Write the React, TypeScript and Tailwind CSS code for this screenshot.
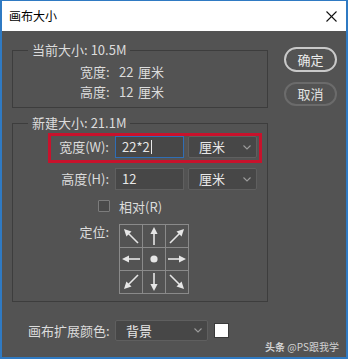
import React from "react";

type ArrowProps = { x1: number; y1: number; x2: number; y2: number };

function Arrow({ x1, y1, x2, y2 }: ArrowProps) {
  const dx = x2 - x1;
  const dy = y2 - y1;
  const len = Math.hypot(dx, dy);
  const ux = dx / len;
  const uy = dy / len;
  const hl = 7;
  const hw = 3.6;
  const bx = x2 - ux * hl;
  const by = y2 - uy * hl;
  const px = -uy;
  const py = ux;
  return (
    <g>
      <line x1={x1} y1={y1} x2={bx + ux} y2={by + uy} stroke="#e6e6e6" strokeWidth={1.6} />
      <polygon
        points={`${x2},${y2} ${bx + px * hw},${by + py * hw} ${bx - px * hw},${by - py * hw}`}
        fill="#e6e6e6"
      />
    </g>
  );
}

function Chevron() {
  return (
    <svg width="8" height="5" viewBox="0 0 8 5">
      <polyline points="0.5,0.5 4,4 7.5,0.5" fill="none" stroke="#9c9c9c" strokeWidth="1.1" />
    </svg>
  );
}

function AnchorGrid() {
  const arrows: ArrowProps[] = [
    { x1: 35, y1: 21, x2: 35, y2: 3 },
    { x1: 35, y1: 49, x2: 35, y2: 67 },
    { x1: 21, y1: 35, x2: 3, y2: 35 },
    { x1: 49, y1: 35, x2: 67, y2: 35 },
    { x1: 19, y1: 19, x2: 5, y2: 5 },
    { x1: 51, y1: 19, x2: 65, y2: 5 },
    { x1: 19, y1: 51, x2: 5, y2: 65 },
    { x1: 51, y1: 51, x2: 65, y2: 65 },
  ];
  return (
    <svg width="70" height="70" viewBox="0 0 70 70">
      <g stroke="#8a8a8a" strokeWidth="1" fill="none">
        <rect x="0.5" y="0.5" width="69" height="69" />
        <line x1="23.5" y1="0" x2="23.5" y2="70" />
        <line x1="46.5" y1="0" x2="46.5" y2="70" />
        <line x1="0" y1="23.5" x2="70" y2="23.5" />
        <line x1="0" y1="46.5" x2="70" y2="46.5" />
      </g>
      {arrows.map((a, i) => (
        <Arrow key={i} {...a} />
      ))}
      <circle cx="35" cy="35" r="3.6" fill="#e6e6e6" />
    </svg>
  );
}

export default function App() {
  return (
    <div className="relative flex h-[359px] w-[348px] flex-col overflow-hidden border-t border-l-2 border-r-2 border-b-2 border-[#2f7ac3] bg-[#535353] font-['Noto_Sans_CJK_SC','Noto_Sans',sans-serif] text-[13px] text-[#dcdcdc]">
      {/* title bar */}
      <div className="flex h-[30px] items-center justify-between bg-white pl-[7px] pr-[9px]">
        <span className="text-[12px] leading-none text-black">画布大小</span>
        <svg width="11" height="11" viewBox="0 0 11 11">
          <line x1="0.5" y1="0.5" x2="10.5" y2="10.5" stroke="#111" strokeWidth="1.1" />
          <line x1="10.5" y1="0.5" x2="0.5" y2="10.5" stroke="#111" strokeWidth="1.1" />
        </svg>
      </div>

      {/* body */}
      <div className="flex flex-1 gap-[16px] pl-[10px] pt-[10px]">
        <div className="flex w-[256px] flex-col">
          {/* current size */}
          <fieldset className="border border-[#3d3d3d] pb-[5px]">
            <legend className="ml-[15px] px-[4px] text-[13px] leading-[18px]">
              当前大小:<span className="ml-[3px]">10.5M</span>
            </legend>
            <div className="pt-[3px]">
              <div className="flex h-[20px] items-center pl-[67px]">
                <span className="w-[39px]">宽度:</span>
                <span className="w-[19px]">22</span>
                <span>厘米</span>
              </div>
              <div className="flex h-[20px] items-center pl-[67px]">
                <span className="w-[39px]">高度:</span>
                <span className="w-[19px]">12</span>
                <span>厘米</span>
              </div>
            </div>
          </fieldset>

          {/* new size */}
          <fieldset className="mt-[6px] border border-[#3d3d3d] pb-[7px]">
            <legend className="ml-[15px] px-[4px] text-[13px] leading-[18px]">
              新建大小:<span className="ml-[3px]">21.1M</span>
            </legend>

            <div className="relative mt-[4px] flex h-[22px] items-center">
              <div className="absolute left-[35px] top-[-3px] h-[30px] w-[214px] border-[3px] border-[#c8122c]" />
              <span className="w-[96px] text-right">宽度(W):</span>
              <div className="ml-[6px] flex h-[22px] w-[69px] items-center border border-[#2f6db5] bg-[#474747] pl-[6px] text-[#e8e8e8]">
                <span>22*2</span>
                <span className="ml-[1px] h-[14px] w-[1px] bg-[#e8e8e8]" />
              </div>
              <div className="ml-[4px] flex h-[22px] w-[69px] items-center justify-between rounded-[2px] border border-[#5f5f5f] bg-[#474747] pl-[10px] pr-[5px] text-[#e8e8e8]">
                <span>厘米</span>
                <Chevron />
              </div>
            </div>

            <div className="mt-[10px] flex h-[22px] items-center">
              <span className="w-[96px] text-right">高度(H):</span>
              <div className="ml-[6px] flex h-[22px] w-[69px] items-center border border-[#5f5f5f] bg-[#474747] pl-[6px] text-[#e8e8e8]">
                12
              </div>
              <div className="ml-[4px] flex h-[22px] w-[69px] items-center justify-between rounded-[2px] border border-[#5f5f5f] bg-[#474747] pl-[10px] pr-[5px] text-[#e8e8e8]">
                <span>厘米</span>
                <Chevron />
              </div>
            </div>

            <div className="mt-[10px] flex h-[12px] items-center pl-[85px]">
              <div className="h-[12px] w-[12px] rounded-[1px] border border-[#7c7c7c] bg-[#4a4a4a]" />
              <span className="ml-[9px] leading-none">相对(R)</span>
            </div>

            <div className="mt-[12px] flex">
              <span className="w-[96px] text-right leading-[16px]">定位:</span>
              <div className="ml-[10px]">
                <AnchorGrid />
              </div>
            </div>
          </fieldset>

          {/* canvas extension colour */}
          <div className="mt-[18px] flex h-[21px] items-center pl-[16px]">
            <span className="w-[87px]">画布扩展颜色:</span>
            <div className="flex h-[21px] w-[93px] items-center justify-between rounded-[2px] border border-[#5f5f5f] bg-[#474747] pl-[10px] pr-[5px] text-[#e8e8e8]">
              <span>背景</span>
              <Chevron />
            </div>
            <div className="ml-[6px] h-[15px] w-[15px] border border-[#3a3a3a] bg-white" />
          </div>
        </div>

        {/* buttons */}
        <div className="flex w-[53px] flex-col gap-[10px] pt-[6px]">
          <button className="flex h-[25px] items-center justify-center rounded-full border-2 border-[#c9c9c9] text-[13px] text-[#ececec]">
            确定
          </button>
          <button className="flex h-[24px] items-center justify-center rounded-full border-2 border-[#6b6b6b] text-[13px] text-[#e4e4e4]">
            取消
          </button>
        </div>
      </div>

      {/* watermark */}
      <div className="absolute bottom-[5px] right-[7px] text-[10px] leading-none text-[#d2d2d2]">
        <span className="font-bold">头条</span> @PS跟我学
      </div>
    </div>
  );
}
